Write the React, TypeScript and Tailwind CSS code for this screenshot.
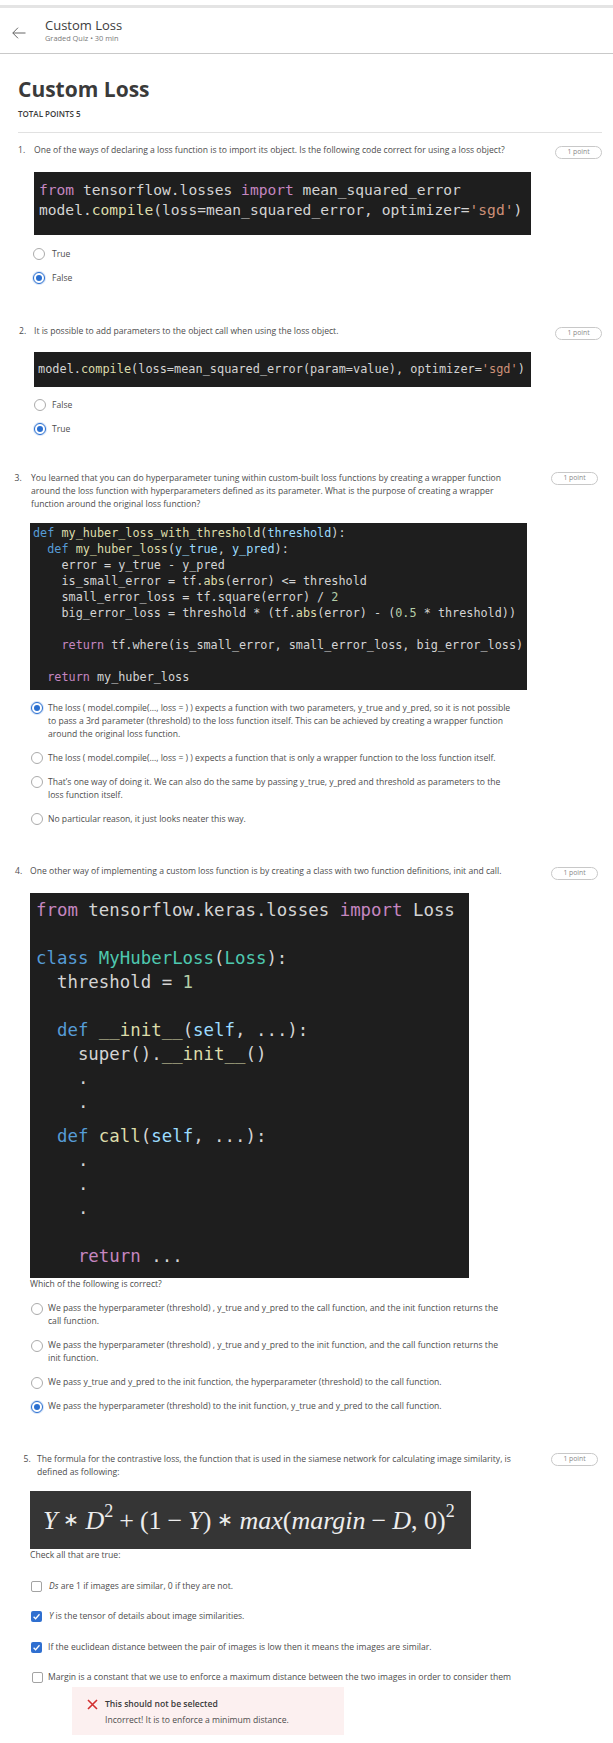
import React from "react";

const kw = "text-[#c586c0]";
const df = "text-[#569cd6]";
const fn = "text-[#dcdcaa]";
const cl = "text-[#4ec9b0]";
const st = "text-[#ce9178]";
const nm = "text-[#b5cea8]";
const pr = "text-[#9cdcfe]";

function Pill({ className = "" }: { className?: string }) {
  return (
    <div
      className={`flex h-[13px] w-[47px] shrink-0 items-center justify-center rounded-full border border-[#c8c8c8] text-[6.8px] leading-none text-[#8a8a8a] ${className}`}
    >
      1 point
    </div>
  );
}

function Radio({ checked }: { checked?: boolean }) {
  return checked ? (
    <span className="mt-[0.5px] flex h-[12px] w-[12px] shrink-0 items-center justify-center rounded-full border-[1.5px] border-[#2a6fd0] bg-white shadow-[0_0_0_1px_#d6e4f8]">
      <span className="h-[6px] w-[6px] rounded-full bg-[#2a6fd0]" />
    </span>
  ) : (
    <span className="mt-[0.5px] h-[12px] w-[12px] shrink-0 rounded-full border border-[#ababab] bg-white" />
  );
}

function Check({ checked }: { checked?: boolean }) {
  return checked ? (
    <span className="mt-[1px] flex h-[11px] w-[11px] shrink-0 items-center justify-center rounded-[2px] bg-[#2f6fd0]">
      <svg width="9" height="9" viewBox="0 0 9 9">
        <path d="M1.6 4.7 L3.6 6.7 L7.5 2.3" fill="none" stroke="white" strokeWidth="1.3" />
      </svg>
    </span>
  ) : (
    <span className="mt-[1px] h-[11px] w-[11px] shrink-0 rounded-[2px] border border-[#a3a3a3] bg-white" />
  );
}

function Opt({
  checked,
  lines,
  gap,
}: {
  checked?: boolean;
  lines: React.ReactNode[];
  gap: string;
}) {
  return (
    <div className={`flex items-start ${gap}`}>
      <Radio checked={checked} />
      <div className="leading-[13px]">
        {lines.map((l, i) => (
          <div key={i} className="whitespace-nowrap">
            {l}
          </div>
        ))}
      </div>
    </div>
  );
}

function ChkOpt({
  checked,
  children,
  gap,
}: {
  checked?: boolean;
  children: React.ReactNode;
  gap: string;
}) {
  return (
    <div className={`flex items-start ${gap}`}>
      <Check checked={checked} />
      <div className="whitespace-nowrap leading-[13px]">{children}</div>
    </div>
  );
}

function Line({ children }: { children?: React.ReactNode }) {
  return <div className="whitespace-pre">{children ?? " "}</div>;
}

export default function App() {
  return (
    <div className="min-h-[1743px] w-full overflow-hidden bg-white font-['Open_Sans',sans-serif] text-[8.6px] text-[#4d4d4d]">
      {/* top band */}
      <div className="h-[5px] bg-white" />
      <div className="h-[3px] bg-[#e4e4e4]" />

      {/* header */}
      <div className="flex h-[46px] border-b border-[#c9c9c9]">
        <div className="w-[45px] shrink-0 pl-[12px] pt-[19px]">
          <svg width="14" height="12" viewBox="0 0 14 12" className="block">
            <path d="M13.5 6 H0.8 M6 0.7 L0.8 6 L6 11.3" fill="none" stroke="#666" strokeWidth="1" />
          </svg>
        </div>
        <div className="pt-[9px]">
          <div className="text-[13px] leading-[16px] text-[#3d3d3d]">Custom Loss</div>
          <div className="text-[7.4px] leading-[10px] text-[#7a7a7a]">Graded Quiz • 30 min</div>
        </div>
      </div>

      {/* title */}
      <div className="pl-[18px]">
        <h1 className="mt-[21px] text-[21px] font-bold leading-[28px] text-[#3a3a3a]">Custom Loss</h1>
        <div className="mt-[6px] text-[8px] font-semibold leading-[10px] text-[#3a3a3a]">TOTAL POINTS 5</div>
      </div>
      <div className="ml-[18px] mr-[11px] mt-[13px] h-px bg-[#e1e1e1]" />

      {/* Q1 */}
      <section className="mt-[11px]">
        <div className="flex pl-[18px] pr-[11px]">
          <div className="w-[16px] shrink-0 leading-[13px]">1.</div>
          <div className="flex-1 whitespace-nowrap leading-[13px]">
            One of the ways of declaring a loss function is to import its object. Is the following code correct for using a loss object?
          </div>
          <Pill className="mt-[1.5px]" />
        </div>
        <div className="ml-[34px] mt-[13.5px] h-[63px] w-[497px] bg-[#1e1e1e] pl-[5px] pt-[8px] font-['DejaVu_Sans_Mono',monospace] text-[14.6px] leading-[20px] text-[#d4d4d4]">
          <Line>
            <span className={kw}>from</span> tensorflow.losses <span className={kw}>import</span> mean_squared_error
          </Line>
          <Line>
            model.<span className={fn}>compile</span>(loss=mean_squared_error, optimizer=<span className={st}>'sgd'</span>)
          </Line>
        </div>
        <div className="ml-[33px] mt-[12.5px] flex flex-col gap-[11px]">
          <Opt gap="gap-[7px]" lines={["True"]} />
          <Opt gap="gap-[7px]" checked lines={["False"]} />
        </div>
      </section>

      {/* Q2 */}
      <section className="mt-[40px]">
        <div className="flex pl-[19px] pr-[11px]">
          <div className="w-[15px] shrink-0 leading-[13px]">2.</div>
          <div className="flex-1 whitespace-nowrap leading-[13px]">
            It is possible to add parameters to the object call when using the loss object.
          </div>
          <Pill className="mt-[2px]" />
        </div>
        <div className="ml-[34px] mt-[12.5px] h-[35px] w-[497px] bg-[#1e1e1e] pl-[4px] pt-[9px] font-['DejaVu_Sans_Mono',monospace] text-[11.9px] leading-[16px] text-[#d4d4d4]">
          <Line>
            model.<span className={fn}>compile</span>(loss=mean_squared_error(param=value), optimizer=<span className={st}>'sgd'</span>)
          </Line>
        </div>
        <div className="ml-[34px] mt-[11.5px] flex flex-col gap-[11px]">
          <Opt gap="gap-[6px]" lines={["False"]} />
          <Opt gap="gap-[6px]" checked lines={["True"]} />
        </div>
      </section>

      {/* Q3 */}
      <section className="mt-[36.5px]">
        <div className="flex pl-[14.5px] pr-[15px]">
          <div className="w-[16.5px] shrink-0 leading-[13px]">3.</div>
          <div className="flex-1 leading-[13px]">
            <div className="whitespace-nowrap">
              You learned that you can do hyperparameter tuning within custom-built loss functions by creating a wrapper function
            </div>
            <div className="whitespace-nowrap">
              around the loss function with hyperparameters defined as its parameter. What is the purpose of creating a wrapper
            </div>
            <div className="whitespace-nowrap">function around the original loss function?</div>
          </div>
          <Pill />
        </div>
        <div className="ml-[30px] mt-[12px] h-[167px] w-[497px] bg-[#1e1e1e] pl-[3px] pt-[2px] font-['DejaVu_Sans_Mono',monospace] text-[11.8px] leading-[16px] text-[#d4d4d4]">
          <Line>
            <span className={df}>def</span> <span className={fn}>my_huber_loss_with_threshold</span>(<span className={pr}>threshold</span>):
          </Line>
          <Line>
            {"  "}<span className={df}>def</span> <span className={fn}>my_huber_loss</span>(<span className={pr}>y_true</span>, <span className={pr}>y_pred</span>):
          </Line>
          <Line>{"    "}error = y_true - y_pred</Line>
          <Line>
            {"    "}is_small_error = tf.<span className={fn}>abs</span>(error) {"<="} threshold
          </Line>
          <Line>
            {"    "}small_error_loss = tf.square(error) / <span className={nm}>2</span>
          </Line>
          <Line>
            {"    "}big_error_loss = threshold * (tf.<span className={fn}>abs</span>(error) - (<span className={nm}>0.5</span> * threshold))
          </Line>
          <Line />
          <Line>
            {"    "}<span className={kw}>return</span> tf.where(is_small_error, small_error_loss, big_error_loss)
          </Line>
          <Line />
          <Line>
            {"  "}<span className={kw}>return</span> my_huber_loss
          </Line>
        </div>
        <div className="ml-[30.5px] mt-[11.5px] flex flex-col gap-[11px]">
          <Opt
            gap="gap-[5.5px]"
            checked
            lines={[
              "The loss ( model.compile(..., loss = ) ) expects a function with two parameters, y_true and y_pred, so it is not possible",
              "to pass a 3rd parameter (threshold) to the loss function itself. This can be achieved by creating a wrapper function",
              "around the original loss function.",
            ]}
          />
          <Opt
            gap="gap-[5.5px]"
            lines={[
              "The loss ( model.compile(..., loss = ) ) expects a function that is only a wrapper function to the loss function itself.",
            ]}
          />
          <Opt
            gap="gap-[5.5px]"
            lines={[
              "That\u2019s one way of doing it. We can also do the same by passing y_true, y_pred and threshold as parameters to the",
              "loss function itself.",
            ]}
          />
          <Opt gap="gap-[5.5px]" lines={["No particular reason, it just looks neater this way."]} />
        </div>
      </section>

      {/* Q4 */}
      <section className="mt-[39px]">
        <div className="flex pl-[15px] pr-[15px]">
          <div className="w-[15px] shrink-0 leading-[13px]">4.</div>
          <div className="flex-1 whitespace-nowrap leading-[13px]">
            One other way of implementing a custom loss function is by creating a class with two function definitions, init and call.
          </div>
          <Pill className="mt-[2px]" />
        </div>
        <div className="ml-[30px] mt-[13px] h-[385px] w-[439px] bg-[#1e1e1e] pl-[6px] pt-[5px] font-['DejaVu_Sans_Mono',monospace] text-[17.4px] leading-[24px] text-[#d4d4d4]">
          <Line>
            <span className={kw}>from</span> tensorflow.keras.losses <span className={kw}>import</span> Loss
          </Line>
          <Line />
          <Line>
            <span className={df}>class</span> <span className={cl}>MyHuberLoss</span>(<span className={cl}>Loss</span>):
          </Line>
          <Line>
            {"  "}threshold = <span className={nm}>1</span>
          </Line>
          <Line />
          <Line>
            {"  "}<span className={df}>def</span> <span className={fn}>__init__</span>(<span className={pr}>self</span>, ...):
          </Line>
          <Line>
            {"    "}super().<span className={fn}>__init__</span>()
          </Line>
          <Line>{"    "}.</Line>
          <Line>{"    "}.</Line>
          <div className="h-[10px]" />
          <Line>
            {"  "}<span className={df}>def</span> <span className={fn}>call</span>(<span className={pr}>self</span>, ...):
          </Line>
          <Line>{"    "}.</Line>
          <Line>{"    "}.</Line>
          <Line>{"    "}.</Line>
          <Line />
          <Line>
            {"    "}<span className={kw}>return</span> ...
          </Line>
        </div>
        <div className="ml-[30px] whitespace-nowrap leading-[13px]">Which of the following is correct?</div>
        <div className="ml-[30.5px] mt-[11.5px] flex flex-col gap-[11px]">
          <Opt
            gap="gap-[5.5px]"
            lines={[
              "We pass the hyperparameter (threshold) , y_true and y_pred to the call function, and the init function returns the",
              "call function.",
            ]}
          />
          <Opt
            gap="gap-[5.5px]"
            lines={[
              "We pass the hyperparameter (threshold) , y_true and y_pred to the init function, and the call function returns the",
              "init function.",
            ]}
          />
          <Opt
            gap="gap-[5.5px]"
            lines={["We pass y_true and y_pred to the init function, the hyperparameter (threshold) to the call function."]}
          />
          <Opt
            gap="gap-[5.5px]"
            checked
            lines={["We pass the hyperparameter (threshold) to the init function, y_true and y_pred to the call function."]}
          />
        </div>
      </section>

      {/* Q5 */}
      <section className="mt-[40px] pb-[15px]">
        <div className="flex pl-[23.5px] pr-[15px]">
          <div className="w-[13.5px] shrink-0 leading-[13px]">5.</div>
          <div className="flex-1 leading-[13px]">
            <div className="whitespace-nowrap">
              The formula for the contrastive loss, the function that is used in the siamese network for calculating image similarity, is
            </div>
            <div className="whitespace-nowrap">defined as following:</div>
          </div>
          <Pill />
        </div>
        <div className="ml-[30px] mt-[12px] flex h-[58px] w-[441px] items-center whitespace-nowrap bg-[#353535] pl-[13px] font-['Liberation_Serif',serif] text-[26px] text-[#ededed]">
          <span className="italic">Y</span>
          <span className="mx-[6px] text-[19px]">∗</span>
          <span className="italic">D</span>
          <sup className="text-[18px]">2</sup>
          <span className="mx-[6px]">+</span>
          <span>(1</span>
          <span className="mx-[6px]">−</span>
          <span className="italic">Y</span>
          <span>)</span>
          <span className="mx-[6px] text-[19px]">∗</span>
          <span className="italic">max</span>
          <span>(</span>
          <span className="italic">margin</span>
          <span className="mx-[6px]">−</span>
          <span className="italic">D</span>
          <span>, 0)</span>
          <sup className="text-[18px]">2</sup>
        </div>
        <div className="ml-[30px] whitespace-nowrap leading-[13px]">Check all that are true:</div>
        <div className="ml-[30.5px] mt-[17.5px] flex flex-col gap-[17.5px]">
          <ChkOpt gap="gap-[7.5px]">
            <span className="italic">Ds</span> are 1 if images are similar, 0 if they are not.
          </ChkOpt>
          <ChkOpt gap="gap-[7.5px]" checked>
            <span className="italic">Y</span> is the tensor of details about image similarities.
          </ChkOpt>
          <ChkOpt gap="gap-[6.5px]" checked>
            If the euclidean distance between the pair of images is low then it means the images are similar.
          </ChkOpt>
          <div>
            <div className="ml-[1.5px]">
              <ChkOpt gap="gap-[5px]">
                Margin is a constant that we use to enforce a maximum distance between the two images in order to consider them
              </ChkOpt>
            </div>
            <div className="ml-[41px] mt-[2.5px] w-[272.5px] bg-[#fcf0f0] pb-[7.5px] pl-[15.5px] pt-[11px]">
              <div className="flex items-start gap-[7px]">
                <svg width="11" height="11" viewBox="0 0 11 11" className="mt-[1px] shrink-0">
                  <path d="M1 1 L10 10 M10 1 L1 10" stroke="#d22f2f" strokeWidth="1.6" />
                </svg>
                <div className="leading-[13px]">
                  <div className="font-semibold text-[#3a3a3a]">This should not be selected</div>
                  <div className="mt-[3.5px]">Incorrect! It is to enforce a minimum distance.</div>
                </div>
              </div>
            </div>
          </div>
        </div>
      </section>
    </div>
  );
}
